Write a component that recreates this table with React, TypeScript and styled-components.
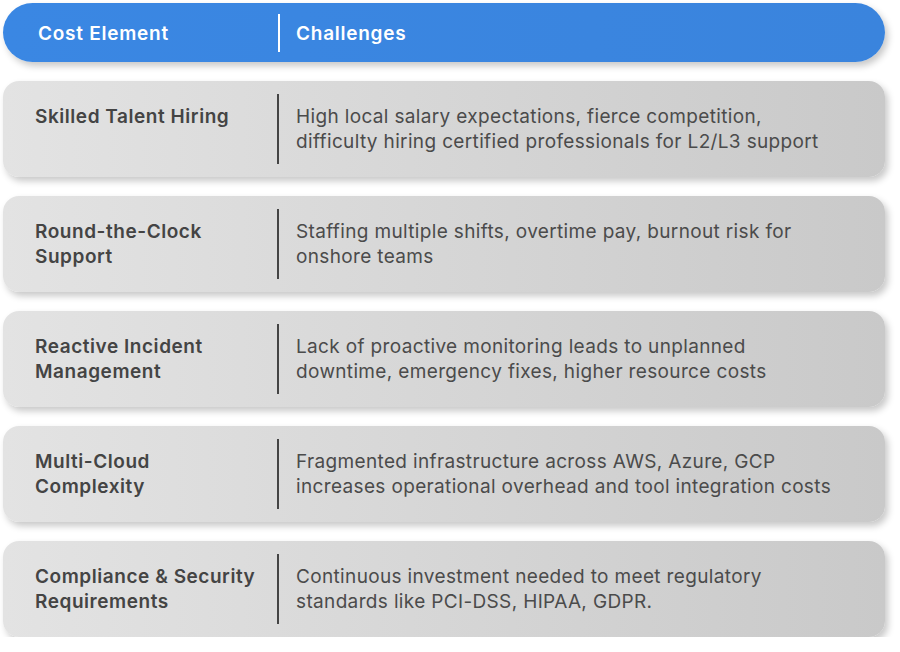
import styled, { createGlobalStyle } from 'styled-components'

type CostRow = {
  element: string[]
  challenge: string[]
}

// line breaks are kept as in the source slide
const rows: CostRow[] = [
  {
    element: ['Skilled Talent Hiring'],
    challenge: [
      'High local salary expectations, fierce competition,',
      'difficulty hiring certified professionals for L2/L3 support',
    ],
  },
  {
    element: ['Round-the-Clock', 'Support'],
    challenge: ['Staffing multiple shifts, overtime pay, burnout risk for', 'onshore teams'],
  },
  {
    element: ['Reactive Incident', 'Management'],
    challenge: [
      'Lack of proactive monitoring leads to unplanned',
      'downtime, emergency fixes, higher resource costs',
    ],
  },
  {
    element: ['Multi-Cloud', 'Complexity'],
    challenge: [
      'Fragmented infrastructure across AWS, Azure, GCP',
      'increases operational overhead and tool integration costs',
    ],
  },
  {
    element: ['Compliance & Security', 'Requirements'],
    challenge: ['Continuous investment needed to meet regulatory', 'standards like PCI-DSS, HIPAA, GDPR.'],
  },
]

function App() {
  return (
    <>
      <GlobalStyle />
      <Page>
        <HeaderBar>
          <HeaderCell>Cost Element</HeaderCell>
          <HeaderDivider />
          <HeaderCell $second>Challenges</HeaderCell>
        </HeaderBar>

        {rows.map((row) => (
          <Row key={row.element.join(' ')}>
            <ElementCell>
              {row.element.map((line) => (
                <Line key={line}>{line}</Line>
              ))}
            </ElementCell>
            <RowDivider />
            <ChallengeCell>
              {row.challenge.map((line) => (
                <Line key={line}>{line}</Line>
              ))}
            </ChallengeCell>
          </Row>
        ))}
      </Page>
    </>
  )
}

const GlobalStyle = createGlobalStyle`
  html, body {
    margin: 0;
    padding: 0;
    background: #fff;
  }

  body {
    font-family: Inter, "Noto Sans", sans-serif;
  }
`

const Page = styled.div`
  width: 882px;
  padding: 3px 0 0 3px;
  display: flex;
  flex-direction: column;
  gap: 19px;
`

const HeaderBar = styled.div`
  height: 59px;
  border-radius: 30px;
  background: linear-gradient(90deg, #3a87e3 0%, #3a84dd 100%);
  box-shadow: 3px 4px 7px rgba(0, 0, 0, 0.22);
  display: grid;
  grid-template-columns: 275px 2px 1fr;
  align-items: center;
`

const HeaderCell = styled.div<{ $second?: boolean }>`
  color: #fff;
  font-size: 19px;
  font-weight: 600;
  letter-spacing: 0.75px;
  padding-top: 2px;
  padding-left: ${(p) => (p.$second ? '16px' : '35px')};
`

const HeaderDivider = styled.div`
  width: 2px;
  height: 38px;
  background: #fff;
`

const Row = styled.div`
  height: 96px;
  box-sizing: border-box;
  padding: 13px 0;
  border-radius: 16px;
  background: linear-gradient(90deg, #e3e3e3 0%, #d6d6d6 50%, #c9c9c9 100%);
  box-shadow: 3px 4px 7px rgba(0, 0, 0, 0.22);
  display: grid;
  grid-template-columns: 274px 2px 1fr;
  align-items: stretch;
`

const Line = styled.span`
  display: block;
  white-space: nowrap;
`

const ElementCell = styled.div`
  padding: 10px 0 0 32px;
  color: #444;
  font-size: 19px;
  font-weight: 600;
  letter-spacing: 0.55px;
  line-height: 25px;
`

const RowDivider = styled.div`
  width: 2px;
  background: #444;
`

const ChallengeCell = styled.div`
  padding: 10px 0 0 17px;
  color: #4b4b4b;
  font-size: 19px;
  font-weight: 400;
  letter-spacing: 0.35px;
  line-height: 25px;
`

export default App
